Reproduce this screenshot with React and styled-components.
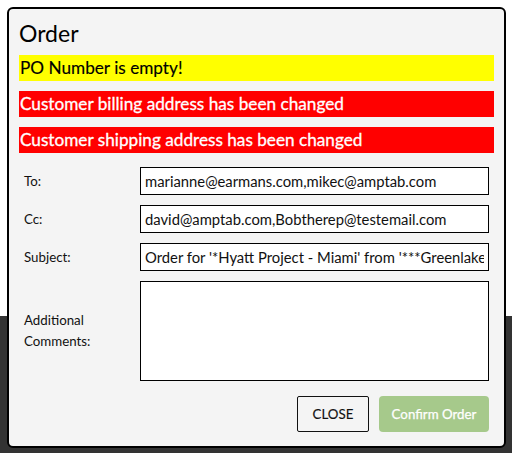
import React from "react";
import styled, { createGlobalStyle } from "styled-components";

const Global = createGlobalStyle`
  html, body { margin: 0; padding: 0; }
  body {
    font-family: Lato, "Open Sans", sans-serif;
    background: linear-gradient(#ffffff 0 316px, #333333 316px);
    min-height: 453px;
  }
`;

const Page = styled.div`
  padding: 7px;
  box-sizing: border-box;
  width: 512px;
`;

const Modal = styled.div`
  box-sizing: border-box;
  width: 499px;
  height: 441px;
  border: 2px solid #000;
  border-radius: 6px;
  background: #f4f4f4;
  padding: 9px 10px 0 10px;
  display: flex;
  flex-direction: column;
`;

const Title = styled.h2`
  margin: 0;
  font-weight: 400;
  font-size: 23px;
  line-height: 30px;
  color: #000;
  height: 37px;
`;

const Alerts = styled.div`
  display: flex;
  flex-direction: column;
  gap: 10px;
`;

const Alert = styled.div`
  height: 26px;
  line-height: 26px;
  font-size: 17.2px;
  background: ${(p) => (p.$level === "warn" ? "#ffff00" : "#ff0000")};
  color: ${(p) => (p.$level === "warn" ? "#000" : "#fff")};
  padding: 0 1px;
  -webkit-text-stroke: ${(p) => (p.$level === "warn" ? "0.15px #000" : "0.3px #fff")};
`;

const Form = styled.div`
  margin-top: 14px;
  padding: 0 5px;
  display: flex;
  flex-direction: column;
  gap: 10px;
`;

const Row = styled.div`
  display: grid;
  grid-template-columns: 116px 1fr;
  align-items: center;
`;

const Label = styled.label`
  font-size: 13.3px;
  line-height: 21px;
  color: #111;
`;

const Field = styled.input`
  box-sizing: border-box;
  width: 100%;
  height: 28px;
  margin: 0;
  border: 1px solid #000;
  border-radius: 0;
  background: #fff;
  font-family: inherit;
  font-size: 14.8px;
  padding: 0 4px;
  color: #111;
  outline: none;
`;

const Comments = styled.textarea`
  box-sizing: border-box;
  display: block;
  width: 100%;
  height: 100px;
  margin: 0;
  border: 1px solid #000;
  border-radius: 0;
  background: #fff;
  font-family: inherit;
  font-size: 14.8px;
  padding: 4px;
  resize: none;
  outline: none;
`;

const Footer = styled.div`
  margin-top: 15px;
  padding-right: 5px;
  display: flex;
  justify-content: flex-end;
  gap: 10px;
`;

const Button = styled.button`
  box-sizing: border-box;
  height: 36px;
  font-family: inherit;
  font-size: 13.3px;
  border-radius: ${(p) => (p.$primary ? "4px" : "2px")};
  border: ${(p) => (p.$primary ? "none" : "1px solid #111")};
  background: ${(p) => (p.$primary ? "#a6c98b" : "transparent")};
  color: ${(p) => (p.$primary ? "#fff" : "#111")};
  width: ${(p) => (p.$primary ? "110px" : "72px")};
  padding: 0;
  -webkit-text-stroke: ${(p) => (p.$primary ? "0.25px #fff" : "0.15px #111")};
`;

export default function App() {
  return (
    <Page>
      <Global />
      <Modal>
        <Title>Order</Title>
        <Alerts>
          <Alert $level="warn">PO Number is empty!</Alert>
          <Alert>Customer billing address has been changed</Alert>
          <Alert>Customer shipping address has been changed</Alert>
        </Alerts>
        <Form>
          <Row>
            <Label>To:</Label>
            <Field readOnly value="marianne@earmans.com,mikec@amptab.com" />
          </Row>
          <Row>
            <Label>Cc:</Label>
            <Field readOnly value="david@amptab.com,Bobtherep@testemail.com" />
          </Row>
          <Row>
            <Label>Subject:</Label>
            <Field
              readOnly
              value="Order for '*Hyatt Project - Miami' from '***Greenlake Demo Company'"
            />
          </Row>
          <Row>
            <Label>
              Additional
              <br />
              Comments:
            </Label>
            <Comments readOnly value="" />
          </Row>
        </Form>
        <Footer>
          <Button>CLOSE</Button>
          <Button $primary>Confirm Order</Button>
        </Footer>
      </Modal>
    </Page>
  );
}
